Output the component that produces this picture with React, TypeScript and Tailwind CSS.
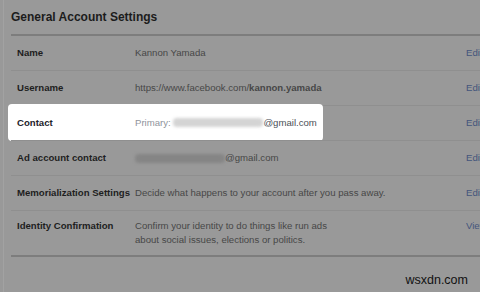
const rows = [
  { label: "Name", value: "Kannon Yamada", action: "Edit" },
  { label: "Username", value: "https://www.facebook.com/", bold: "kannon.yamada", action: "Edit" },
];

const Blur = ({ light }: { light?: boolean }) => (
  <span
    className={`inline-block w-[90px] h-[9px] rounded-sm blur-[1.5px] ${
      light ? "bg-[#d4d4d4]" : "bg-[#858585]"
    }`}
  />
);

const Row = ({
  label,
  children,
  action,
  tall,
}: {
  label: string;
  children: React.ReactNode;
  action: string;
  tall?: boolean;
}) => (
  <div
    className={`flex border-b border-[#8f8f8f] ${
      tall ? "h-[45px] items-start pt-[8px]" : "h-[35px] items-center"
    }`}
  >
    <div className="w-[124px] pl-[6px] font-bold text-[#1e1e1e]">{label}</div>
    <div className="flex-1 text-[#474747] leading-[14px]">{children}</div>
    <div className="w-[14px] text-[#44557c] overflow-hidden whitespace-nowrap">{action}</div>
  </div>
);

const App = () => {
  return (
    <div
      className="w-[480px] h-[292px] bg-[#999999] overflow-hidden relative"
      style={{ fontFamily: '"Liberation Sans", Arial, sans-serif' }}
    >
      <div className="ml-[3px] h-full border-l border-[#a2a2a2]">
        <div className="h-[34px] flex items-center pl-[7px] text-[12px] font-bold text-[#1c1c1c]">
          General Account Settings
        </div>
        <div className="ml-[7px] border-t-2 border-[#7d7d7d] text-[9.6px]">
          {rows.map((r) => (
            <Row key={r.label} label={r.label} action={r.action}>
              {r.value}
              {r.bold && <span className="font-bold">{r.bold}</span>}
            </Row>
          ))}
          <div className="relative">
            <div className="absolute left-[-3px] top-[-2px] w-[315px] h-[37px] bg-white rounded-[4px]" />
            <div className="relative flex h-[35px] items-center border-b border-[#8f8f8f]">
              <div className="w-[124px] pl-[6px] font-bold text-[#1d2129]">Contact</div>
              <div className="flex-1 flex items-center text-[#90949c]">
                Primary:&nbsp;
                <Blur light />
                <span className="text-[#4b4f56]">@gmail.com</span>
              </div>
              <div className="w-[14px] text-[#44557c] overflow-hidden whitespace-nowrap">Edit</div>
            </div>
          </div>
          <Row label="Ad account contact" action="Edit">
            <span className="flex items-center">
              <Blur />
              <span>@gmail.com</span>
            </span>
          </Row>
          <Row label="Memorialization Settings" action="Edit">
            Decide what happens to your account after you pass away.
          </Row>
          <Row label="Identity Confirmation" action="View" tall>
            Confirm your identity to do things like run ads
            <br />
            about social issues, elections or politics.
          </Row>
          <div className="border-t-2 border-[#7d7d7d] -mt-px" />
        </div>
      </div>
      <div className="absolute right-[12px] bottom-[2px] text-[12.5px] text-[#111]">wsxdn.com</div>
    </div>
  );
};

export default App;
